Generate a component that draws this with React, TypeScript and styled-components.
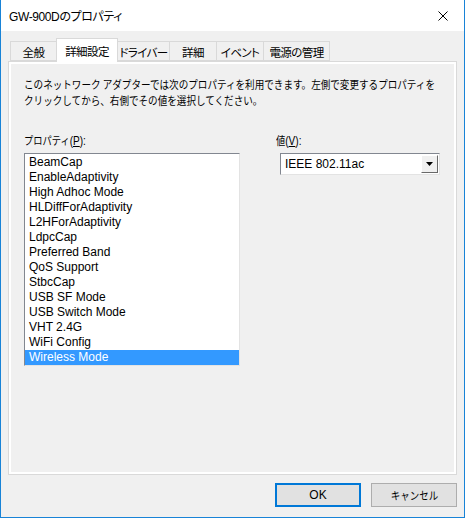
import React from "react";
import styled, { createGlobalStyle } from "styled-components";

const GlobalStyle = createGlobalStyle`
  html, body {
    margin: 0;
    padding: 0;
    background: #f0f0f0;
  }
  * {
    box-sizing: border-box;
  }
  body {
    font-family: "Noto Sans CJK JP", "Liberation Sans", sans-serif;
    font-size: 12px;
    color: #000;
  }
`;

const latin = `"Liberation Sans", "Noto Sans CJK JP", sans-serif`;

const tabs = [
  { label: "全般", width: 47 },
  { label: "詳細設定", width: 62 },
  { label: "ドライバー", width: 53 },
  { label: "詳細", width: 48 },
  { label: "イベント", width: 48 },
  { label: "電源の管理", width: 67 },
];

const properties = [
  "BeamCap",
  "EnableAdaptivity",
  "High Adhoc Mode",
  "HLDiffForAdaptivity",
  "L2HForAdaptivity",
  "LdpcCap",
  "Preferred Band",
  "QoS Support",
  "StbcCap",
  "USB SF Mode",
  "USB Switch Mode",
  "VHT 2.4G",
  "WiFi Config",
  "Wireless Mode",
];

export default function App() {
  return (
    <>
      <GlobalStyle />
      <Window>
        <TitleBar>
          <Title>
            <Latin>GW-900D</Latin>のプロパティ
          </Title>
          <CloseButton>
            <svg width="10" height="10" viewBox="0 0 10 10">
              <path d="M0.5 0.5 L9.5 9.5 M9.5 0.5 L0.5 9.5" stroke="#000" strokeWidth="1" />
            </svg>
          </CloseButton>
        </TitleBar>

        <Body>
          <TabStrip>
            {tabs.map((t, i) => (
              <Tab key={t.label} $width={t.width} $active={i === 1}>
                {t.label}
              </Tab>
            ))}
          </TabStrip>

          <Panel>
            <Description>
              このネットワーク アダプターでは次のプロパティを利用できます。左側で変更するプロパティを
              <br />
              クリックしてから、右側でその値を選択してください。
            </Description>

            <Columns>
              <Column>
                <Label>
                  プロパティ
                  <Latin>
                    (<u>P</u>):
                  </Latin>
                </Label>
                <ListBox>
                  {properties.map((p) => (
                    <ListItem key={p} $selected={p === "Wireless Mode"}>
                      {p}
                    </ListItem>
                  ))}
                </ListBox>
              </Column>

              <Column>
                <Label>
                  値
                  <Latin>
                    (<u>V</u>):
                  </Latin>
                </Label>
                <Combo>
                  <ComboText>IEEE 802.11ac</ComboText>
                  <ComboButton>
                    <svg width="7" height="4" viewBox="0 0 7 4">
                      <path d="M0 0 H7 L3.5 4 Z" fill="#000" />
                    </svg>
                  </ComboButton>
                </Combo>
              </Column>
            </Columns>
          </Panel>

          <ButtonRow>
            <DialogButton $default>
              <Latin>OK</Latin>
            </DialogButton>
            <DialogButton>
              <ButtonJp>キャンセル</ButtonJp>
            </DialogButton>
          </ButtonRow>
        </Body>
      </Window>
    </>
  );
}

const Latin = styled.span`
  font-family: ${latin};
  font-size: 12px;
`;

const Window = styled.div`
  width: 465px;
  height: 518px;
  background: #f0f0f0;
  border: 1px solid #1883d7;
  border-top: none;
  display: flex;
  flex-direction: column;
`;

const TitleBar = styled.div`
  height: 31px;
  background: #fff;
  display: flex;
  align-items: center;
  justify-content: space-between;
  padding-left: 8px;
`;

const Title = styled.div`
  font-size: 12px;
  letter-spacing: -0.4px;
  font-feature-settings: "palt" 1;
`;

const CloseButton = styled.div`
  width: 46px;
  height: 31px;
  display: flex;
  align-items: center;
  justify-content: center;
  margin-right: -2px;
`;

const Body = styled.div`
  flex: 1;
  display: flex;
  flex-direction: column;
  padding: 7px 7px 0 7px;
`;

const TabStrip = styled.div`
  display: flex;
  align-items: flex-end;
  height: 23px;
  padding-left: 2px;
  position: relative;
  z-index: 1;
`;

const Tab = styled.div<{ $width: number; $active?: boolean }>`
  width: ${(p) => p.$width}px;
  height: ${(p) => (p.$active ? 24 : 20)}px;
  margin-bottom: ${(p) => (p.$active ? -1 : 0)}px;
  margin-left: -1px;
  background: ${(p) => (p.$active ? "#fff" : "#f0f0f0")};
  border: 1px solid #d9d9d9;
  border-bottom: ${(p) => (p.$active ? "none" : "1px solid #d9d9d9")};
  display: flex;
  align-items: center;
  justify-content: center;
  padding-top: ${(p) => (p.$active ? 0 : 1)}px;
  position: relative;
  z-index: ${(p) => (p.$active ? 2 : 1)};
  white-space: nowrap;
  font-size: 11.5px;
  letter-spacing: -0.6px;
  font-feature-settings: "palt" 1;
  &:first-child {
    margin-left: 0;
  }
`;

const Panel = styled.div`
  height: 414px;
  border: 1px solid #d9d9d9;
  box-shadow: inset 0 0 0 2px #fff;
  padding: 14px 14px 0 15px;
`;

/* the dialog font is a condensed one; squeeze Noto horizontally to match */
const Description = styled.div`
  line-height: 16px;
  white-space: nowrap;
  font-size: 11px;
  transform: scaleX(0.87);
  transform-origin: left center;
`;

const Columns = styled.div`
  display: flex;
  gap: 36px;
  margin-top: 24px;
`;

const Column = styled.div`
  display: flex;
  flex-direction: column;
`;

const Label = styled.div`
  line-height: 16px;
  height: 16px;
  margin-bottom: 5px;
  font-size: 11px;
  white-space: nowrap;
  transform: scaleX(0.84);
  transform-origin: left center;
`;

const ListBox = styled.div`
  width: 216px;
  height: 213px;
  background: #fff;
  border: 1px solid;
  border-color: #828790 #e3e3e3 #e3e3e3 #828790;
  padding: 1px 0 0 0;
  font-family: ${latin};
`;

const ListItem = styled.div<{ $selected?: boolean }>`
  height: 15px;
  line-height: 15px;
  padding-left: 4px;
  background: ${(p) => (p.$selected ? "#3399ff" : "transparent")};
  color: ${(p) => (p.$selected ? "#fff" : "#000")};
  white-space: nowrap;
`;

const Combo = styled.div`
  width: 160px;
  height: 22px;
  margin-left: 4px;
  background: #fff;
  border: 1px solid;
  border-color: #828790 #e3e3e3 #e3e3e3 #828790;
  display: flex;
  align-items: center;
  justify-content: space-between;
  padding: 1px;
  font-family: ${latin};
`;

const ComboText = styled.div`
  padding-left: 3px;
`;

const ComboButton = styled.div`
  width: 17px;
  height: 18px;
  background: #f0f0f0;
  border: 1px solid;
  border-color: #fff #696969 #696969 #fff;
  display: flex;
  align-items: center;
  justify-content: center;
`;

const ButtonRow = styled.div`
  display: flex;
  justify-content: flex-end;
  gap: 10px;
  margin-top: 8px;
`;

const DialogButton = styled.div<{ $default?: boolean }>`
  width: 86px;
  height: 24px;
  background: #e1e1e1;
  border: ${(p) => (p.$default ? "2px solid #0078d7" : "1px solid #adadad")};
  display: flex;
  align-items: center;
  justify-content: center;
`;

const ButtonJp = styled.span`
  display: inline-block;
  font-size: 11px;
  white-space: nowrap;
  transform: scaleX(0.86);
`;
